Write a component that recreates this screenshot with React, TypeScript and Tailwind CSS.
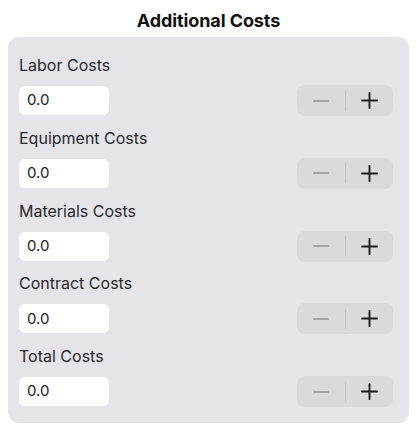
import React from 'react';

const rows = ['Labor Costs', 'Equipment Costs', 'Materials Costs', 'Contract Costs', 'Total Costs'];

const Stepper: React.FC = () => (
  <div className="flex items-center w-[96px] h-[31px] rounded-[8px] bg-[#d9d9de]">
    <div className="flex-1 flex items-center justify-center">
      <svg width="16" height="16" viewBox="0 0 16 16">
        <path d="M1 8h14" stroke="#a3a3a8" strokeWidth="1.8" strokeLinecap="round" />
      </svg>
    </div>
    <div className="w-px h-[20px] bg-[#c6c6cb]" />
    <div className="flex-1 flex items-center justify-center">
      <svg width="17" height="17" viewBox="0 0 17 17">
        <path d="M1 8.5h15M8.5 1v15" stroke="#1c1c1e" strokeWidth="1.9" strokeLinecap="round" />
      </svg>
    </div>
  </div>
);

export default function App() {
  return (
    <div className="w-[417px] h-[429px] bg-white font-['Inter','Liberation_Sans',sans-serif]">
      <h1 className="h-[37px] flex items-center justify-center text-[18px] font-bold tracking-[-0.1px] text-[#111] pt-[3px]">
        Additional Costs
      </h1>
      <div className="mx-[8px] w-[401px] h-[386px] rounded-[11px] bg-[#e4e4e9] px-[11px] pt-[17px] flex flex-col gap-[10.75px]">
        {rows.map(label => (
          <div key={label} className="flex flex-col">
            <div className="h-[22px] flex items-center text-[16px] text-[#2a2a2c]">{label}</div>
            <div className="mt-[9px] flex items-center justify-between pr-[5px]">
              <div className="w-[90px] h-[29px] rounded-[6px] bg-white flex items-center pl-[8px] text-[15px] text-[#1c1c1e]">
                0.0
              </div>
              <Stepper />
            </div>
          </div>
        ))}
      </div>
    </div>
  );
}
